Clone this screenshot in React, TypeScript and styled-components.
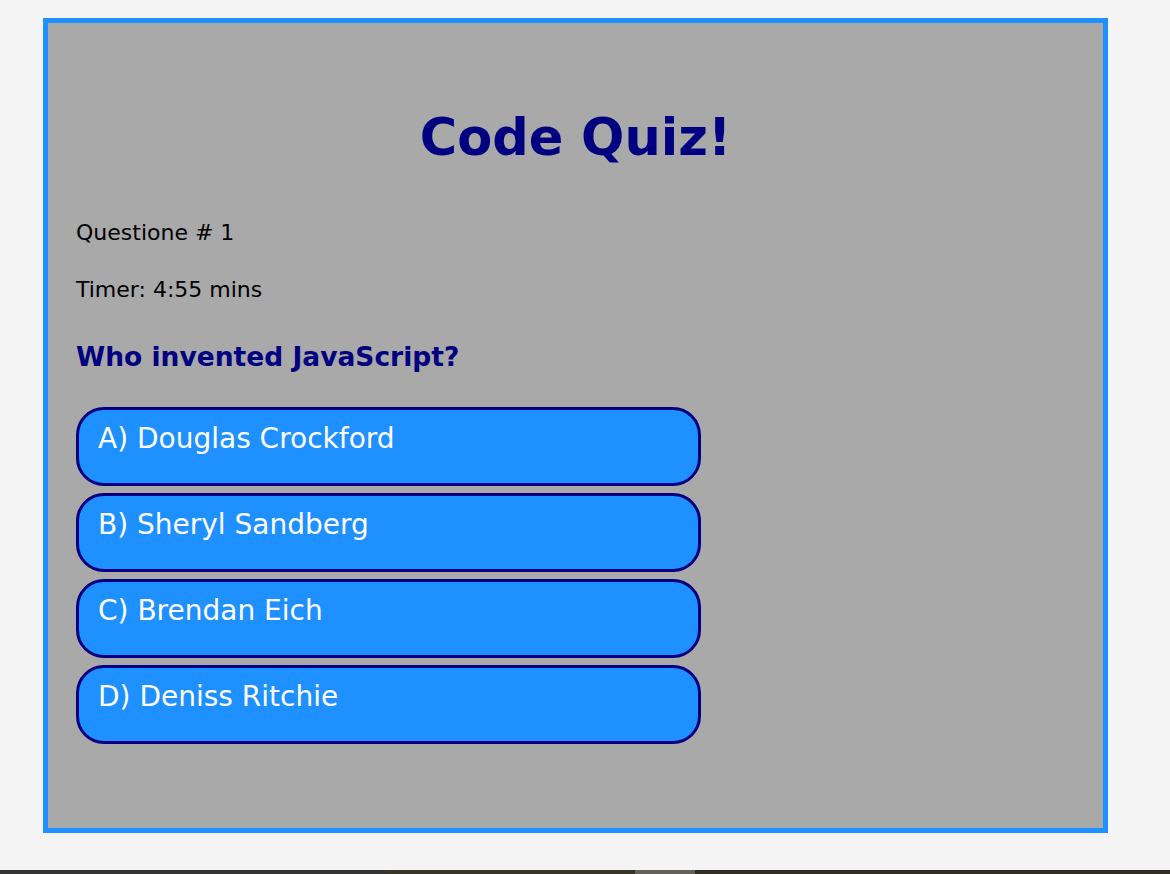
import React from "react";
import styled, { createGlobalStyle } from "styled-components";

const Global = createGlobalStyle`
  html, body { margin: 0; padding: 0; }
  body {
    background: #f4f4f4;
    font-family: "Comic Sans MS", "DejaVu Sans", sans-serif;
    overflow: hidden;
  }
`;

const Page = styled.div`
  height: 874px;
  display: flex;
  flex-direction: column;
  box-sizing: border-box;
`;

const Main = styled.main`
  flex: 1;
  padding: 18px 62px 0 43px;
`;

const Card = styled.section`
  box-sizing: border-box;
  height: 815px;
  border: 5px solid #1e90ff;
  background: #a9a9a9;
  padding: 0 28px;
  display: flex;
  flex-direction: column;
`;

const Title = styled.h1`
  margin: 80px 0 0;
  text-align: center;
  color: #000080;
  font-size: 51px;
  line-height: 70px;
  font-weight: 700;
`;

const Info = styled.p<{ $gap: number }>`
  margin: ${(p) => p.$gap}px 0 0;
  font-size: 22px;
  line-height: 24px;
  color: #000;
`;

const Question = styled.h2`
  margin: 38px 0 0;
  font-size: 26.5px;
  line-height: 34px;
  font-weight: 700;
  color: #000080;
`;

const Answers = styled.div`
  margin-top: 33px;
  display: flex;
  flex-direction: column;
  gap: 7px;
  width: 625px;
`;

const Answer = styled.button`
  box-sizing: border-box;
  height: 79px;
  border: 3px solid #000080;
  border-radius: 28px;
  background: #1e90ff;
  color: #fff;
  font-family: inherit;
  font-size: 28px;
  line-height: 36px;
  text-align: left;
  padding: 11px 19px 0;
  display: flex;
  align-items: flex-start;
  cursor: pointer;
`;

const Strip = styled.div`
  height: 4px;
  display: flex;
`;

const Seg = styled.div<{ $w: number; $c: string }>`
  width: ${(p) => p.$w}px;
  background: ${(p) => p.$c};
  flex-shrink: 0;
`;

const answers = [
  "A) Douglas Crockford",
  "B) Sheryl Sandberg",
  "C) Brendan Eich",
  "D) Deniss Ritchie",
];

export default function App() {
  return (
    <Page>
      <Global />
      <Main>
        <Card>
          <Title>Code Quiz!</Title>
          <Info $gap={48}>Questione # 1</Info>
          <Info $gap={33}>Timer: 4:55 mins</Info>
          <Question>Who invented JavaScript?</Question>
          <Answers>
            {answers.map((a) => (
              <Answer key={a}>{a}</Answer>
            ))}
          </Answers>
        </Card>
      </Main>
      <Strip>
        <Seg $w={386} $c="#333333" />
        <Seg $w={249} $c="#3a3328" />
        <Seg $w={60} $c="#66605a" />
        <Seg $w={475} $c="#332c25" />
      </Strip>
    </Page>
  );
}
